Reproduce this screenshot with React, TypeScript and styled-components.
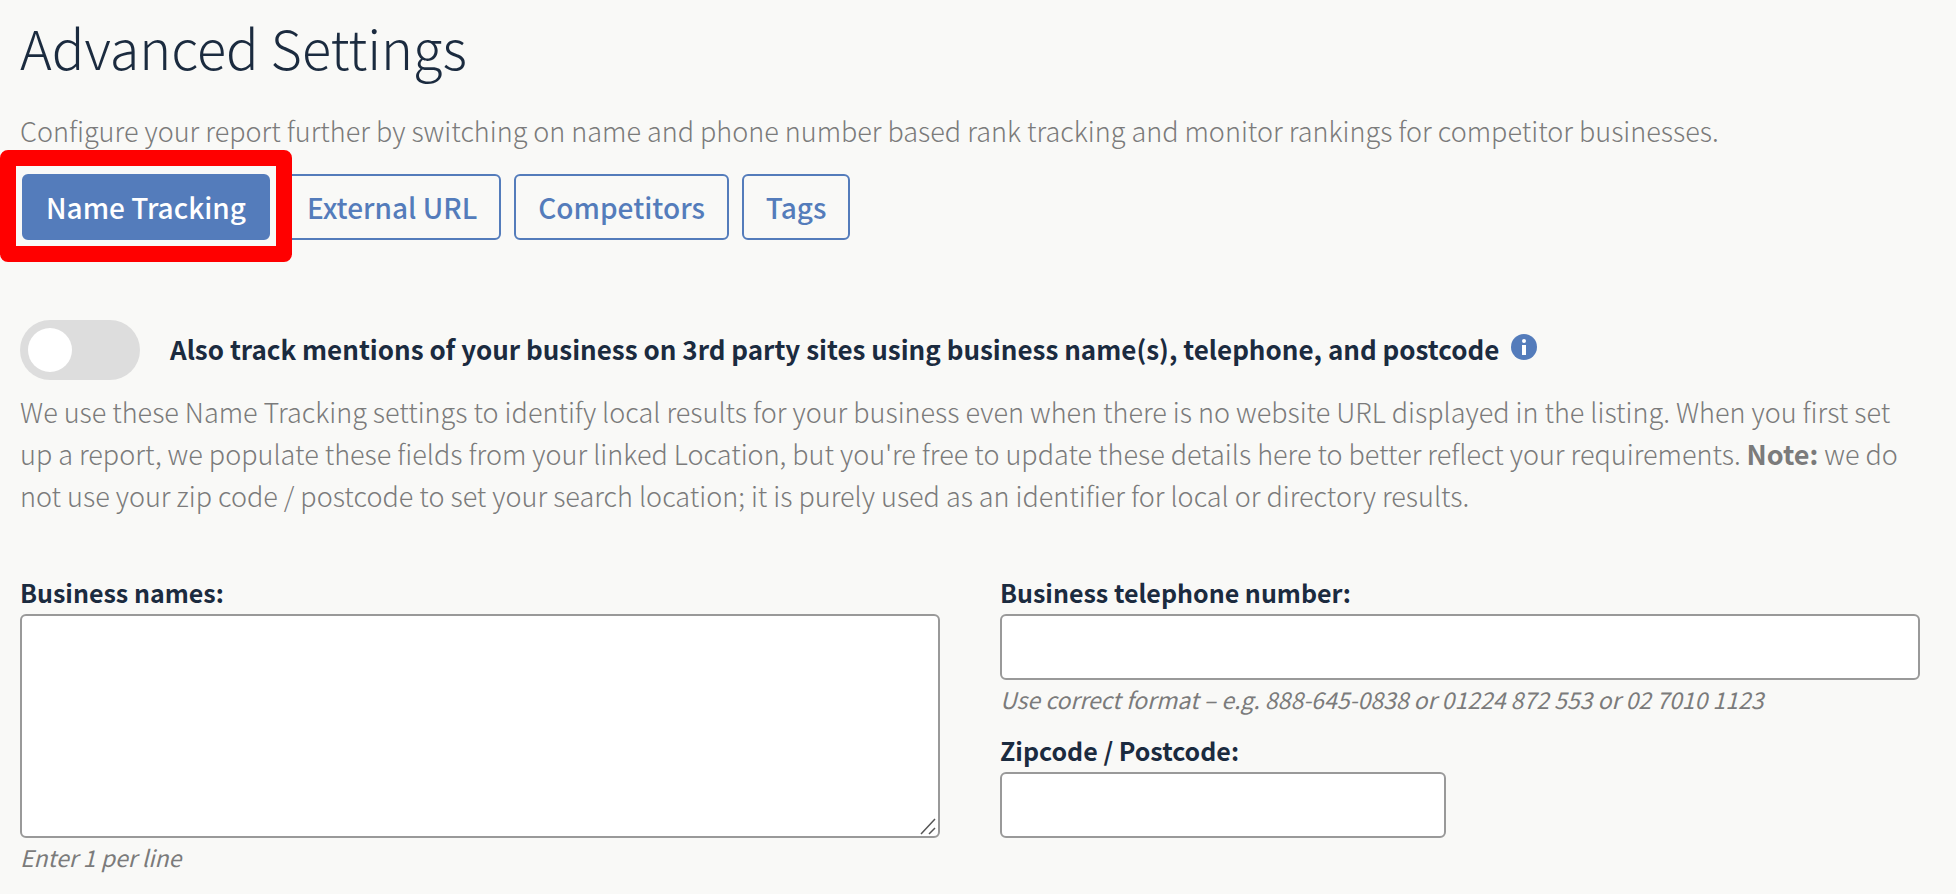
import React, { useState } from 'react';
import styled, { createGlobalStyle } from 'styled-components';

const navy = '#1b2b3f';
const grey = '#7b7b7b';
const blue = '#547cbb';

const GlobalStyle = createGlobalStyle`
  *, *::before, *::after { box-sizing: border-box; }
  body {
    margin: 0;
    background: #f9f9f7;
    color: ${navy};
    font-family: 'Noto Sans CJK SC', 'Open Sans', sans-serif;
    font-size: 27px;
    line-height: 42px;
  }
  button, input, textarea { font: inherit; color: inherit; }
`;

const Page = styled.main`
  padding: 11px 36px 20px 20px;
`;

const Title = styled.h1`
  margin: 0;
  font-size: 54px;
  line-height: 72px;
  font-weight: 300;
`;

const Text = styled.p`
  margin: 0;
  color: ${grey};
  font-weight: 300;
`;

const Intro = styled(Text)`
  margin-top: 27px;
`;

const Details = styled(Text)`
  margin-top: 11px;

  b { font-weight: 700; }
`;

const Tabs = styled.nav`
  display: flex;
  gap: 13px;
  margin: 22px 0 0 2px;
`;

const Tab = styled.button<{ $active?: boolean }>`
  height: 66px;
  padding: 0 22px;
  border: 2px solid ${blue};
  border-radius: 6px;
  background: ${(p) => (p.$active ? blue : 'transparent')};
  color: ${(p) => (p.$active ? '#fff' : blue)};
  font-size: 28px;
  line-height: 60px;
  font-weight: 500;
  white-space: nowrap;
  cursor: pointer;
`;

const Highlighted = styled.div`
  position: relative;
  display: flex;

  &::after {
    content: '';
    position: absolute;
    inset: -24px -22px -22px -22px;
    border: 16px solid #ff0000;
    border-radius: 8px;
    pointer-events: none;
  }
`;

const ToggleRow = styled.div`
  display: flex;
  align-items: center;
  margin-top: 80px;
`;

const Switch = styled.input`
  appearance: none;
  flex: none;
  width: 120px;
  height: 60px;
  margin: 0 30px 0 0;
  padding: 8px;
  border-radius: 30px;
  background: #ddd;
  cursor: pointer;

  &::before {
    content: '';
    display: block;
    width: 44px;
    height: 44px;
    border-radius: 50%;
    background: #fff;
  }
  &:checked { background: ${blue}; }
  &:checked::before { margin-left: 60px; }
`;

const SwitchLabel = styled.label`
  padding-bottom: 2px;
  font-size: 26px;
  font-weight: 700;
`;

const InfoButton = styled.button`
  display: flex;
  margin: 0 0 6px 12px;
  padding: 0;
  border: 0;
  background: none;
  cursor: pointer;
`;

const Fields = styled.div`
  display: grid;
  grid-template-columns: 1fr 1fr;
  gap: 60px;
  margin-top: 53px;
`;

const Column = styled.div`
  display: flex;
  flex-direction: column;
  gap: 10px;
`;

const Field = styled.div`
  display: flex;
  flex-direction: column;
`;

const Label = styled.label`
  font-size: 25px;
  line-height: 44px;
  font-weight: 700;
`;

const Input = styled.input<{ $half?: boolean }>`
  width: ${(p) => (p.$half ? 'calc(50% - 14px)' : '100%')};
  height: 66px;
  margin: 0;
  padding: 0 16px;
  border: 2px solid #999;
  border-radius: 6px;
  background: #fff;
`;

const AreaWrap = styled.div`
  position: relative;
  display: flex;
`;

const Area = styled.textarea`
  width: 100%;
  height: 224px;
  margin: 0;
  padding: 10px 16px;
  border: 2px solid #999;
  border-radius: 6px;
  background: #fff;
  resize: none;
`;

const Grip = styled.svg`
  position: absolute;
  right: 3px;
  bottom: 3px;
  pointer-events: none;
`;

const Hint = styled.small`
  color: ${grey};
  font-size: 23px;
  line-height: 38px;
  font-style: italic;
  font-weight: 400;
`;

const tabs = ['External URL', 'Competitors', 'Tags'];

export default function App() {
  const [tracking, setTracking] = useState(false);
  return (
    <>
      <GlobalStyle />
      <Page>
        <Title>Advanced Settings</Title>
        <Intro>
          Configure your report further by switching on name and phone number based rank tracking and
          monitor rankings for competitor businesses.
        </Intro>
        <Tabs>
          <Highlighted>
            <Tab type="button" $active>Name Tracking</Tab>
          </Highlighted>
          {tabs.map((name) => (
            <Tab type="button" key={name}>{name}</Tab>
          ))}
        </Tabs>
        <ToggleRow>
          <Switch
            id="tracking"
            type="checkbox"
            role="switch"
            checked={tracking}
            onChange={(e) => setTracking(e.target.checked)}
          />
          <SwitchLabel htmlFor="tracking">
            Also track mentions of your business on 3rd party sites using business name(s), telephone,
            and postcode
          </SwitchLabel>
          <InfoButton type="button" aria-label="More information">
            <svg width="26" height="26" viewBox="0 0 26 26" aria-hidden="true">
              <circle cx="13" cy="13" r="13" fill={blue} />
              <circle cx="13" cy="7" r="2" fill="#fff" />
              <rect x="11" y="11" width="4" height="10" fill="#fff" />
            </svg>
          </InfoButton>
        </ToggleRow>
        <Details>
          We use these Name Tracking settings to identify local results for your business even when
          there is no website URL displayed in the listing. When you first set up a report, we populate
          these fields from your linked Location, but you're free to update these details here to better
          reflect your requirements. <b>Note:</b> we do not use your zip code / postcode to set your
          search location; it is purely used as an identifier for local or directory results.
        </Details>
        <Fields>
          <Field>
            <Label htmlFor="names">Business names:</Label>
            <AreaWrap>
              <Area id="names" />
              <Grip width="17" height="17" viewBox="0 0 17 17" aria-hidden="true">
                <path d="M1 16 15 1M9 16l6-6" fill="none" stroke="#555" strokeWidth="1.5" />
              </Grip>
            </AreaWrap>
            <Hint>Enter 1 per line</Hint>
          </Field>
          <Column>
            <Field>
              <Label htmlFor="phone">Business telephone number:</Label>
              <Input id="phone" type="tel" />
              <Hint>Use correct format – e.g. 888-645-0838 or 01224 872 553 or 02 7010 1123</Hint>
            </Field>
            <Field>
              <Label htmlFor="zip">Zipcode / Postcode:</Label>
              <Input id="zip" type="text" $half />
            </Field>
          </Column>
        </Fields>
      </Page>
    </>
  );
}
